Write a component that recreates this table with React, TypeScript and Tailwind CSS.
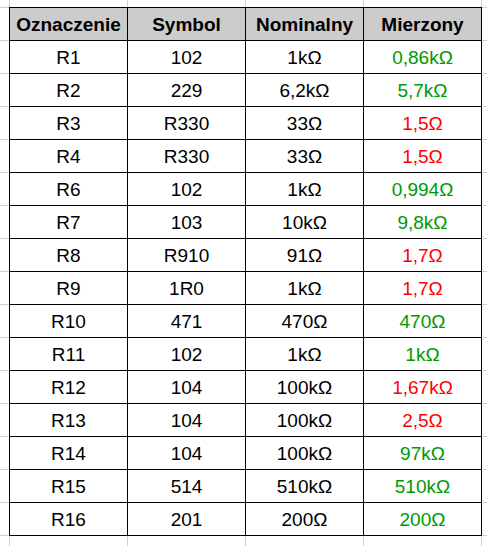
import React from "react";

type Row = { id: string; symbol: string; nominal: string; measured: string; ok: boolean };

const rows: Row[] = [
  { id: "R1", symbol: "102", nominal: "1kΩ", measured: "0,86kΩ", ok: true },
  { id: "R2", symbol: "229", nominal: "6,2kΩ", measured: "5,7kΩ", ok: true },
  { id: "R3", symbol: "R330", nominal: "33Ω", measured: "1,5Ω", ok: false },
  { id: "R4", symbol: "R330", nominal: "33Ω", measured: "1,5Ω", ok: false },
  { id: "R6", symbol: "102", nominal: "1kΩ", measured: "0,994Ω", ok: true },
  { id: "R7", symbol: "103", nominal: "10kΩ", measured: "9,8kΩ", ok: true },
  { id: "R8", symbol: "R910", nominal: "91Ω", measured: "1,7Ω", ok: false },
  { id: "R9", symbol: "1R0", nominal: "1kΩ", measured: "1,7Ω", ok: false },
  { id: "R10", symbol: "471", nominal: "470Ω", measured: "470Ω", ok: true },
  { id: "R11", symbol: "102", nominal: "1kΩ", measured: "1kΩ", ok: true },
  { id: "R12", symbol: "104", nominal: "100kΩ", measured: "1,67kΩ", ok: false },
  { id: "R13", symbol: "104", nominal: "100kΩ", measured: "2,5Ω", ok: false },
  { id: "R14", symbol: "104", nominal: "100kΩ", measured: "97kΩ", ok: true },
  { id: "R15", symbol: "514", nominal: "510kΩ", measured: "510kΩ", ok: true },
  { id: "R16", symbol: "201", nominal: "200Ω", measured: "200Ω", ok: true },
];

const headers = ["Oznaczenie", "Symbol", "Nominalny", "Mierzony"];

export default function App() {
  return (
    <div
      className="w-[487px] h-[546px] overflow-hidden bg-white pt-[7px] pl-[9px] font-['Liberation_Sans',Arial,sans-serif] text-black [background-image:linear-gradient(to_right,#d0d0d0_1px,transparent_1px),linear-gradient(to_bottom,#d0d0d0_1px,transparent_1px)] [background-size:118px_33px] [background-position:9px_7px]"
    >
      {/* spreadsheet range with black borders */}
      <table className="w-[473px] table-fixed border-collapse bg-white">
        <thead>
          <tr className="h-[33px]">
            {headers.map((h) => (
              <th
                key={h}
                className="border border-black bg-[#cccccc] p-0 text-center text-[19px] font-bold leading-none"
              >
                {h}
              </th>
            ))}
          </tr>
        </thead>
        <tbody>
          {rows.map((r) => (
            <tr key={r.id} className="h-[33px] text-[19px] leading-none">
              <td className="border border-black p-0 text-center">{r.id}</td>
              <td className="border border-black p-0 text-center">{r.symbol}</td>
              <td className="border border-black p-0 text-center">{r.nominal}</td>
              <td className={`border border-black p-0 text-center ${r.ok ? "text-[#009900]" : "text-[#ff0000]"}`}>
                {r.measured}
              </td>
            </tr>
          ))}
        </tbody>
      </table>
    </div>
  );
}
